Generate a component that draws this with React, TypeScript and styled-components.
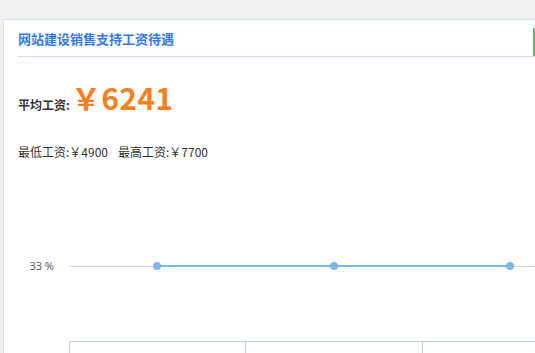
import React from "react";
import styled, { createGlobalStyle } from "styled-components";

const Global = createGlobalStyle`
  html, body { margin: 0; padding: 0; overflow: hidden; }
  body {
    background: #f1f1f1;
    font-family: "Noto Sans CJK SC", "Noto Sans", sans-serif;
    color: #333;
  }
`;

const Page = styled.div`
  padding: 19px 0 0 3px;
  width: 535px;
  height: 353px;
  box-sizing: border-box;
  overflow: hidden;
`;

const Card = styled.div`
  background: #fff;
  border-top: 1px solid #d3e1f5;
  border-left: 1px solid #d3e1f5;
  height: 334px;
  box-sizing: border-box;
  display: flex;
  flex-direction: column;
`;

const Header = styled.div`
  margin-left: 14px;
  height: 36px;
  flex-shrink: 0;
  border-bottom: 1px solid #d3e1f5;
  display: flex;
  align-items: center;
  justify-content: space-between;
`;

const Title = styled.h2`
  margin: 0;
  font-size: 13px;
  font-weight: 700;
  color: #3478ea;
  line-height: 1;
  padding-top: 1px;
`;

const GreenTab = styled.div`
  align-self: flex-end;
  width: 2px;
  height: 28px;
  background: #5cb85c;
`;

const AvgRow = styled.div`
  margin: 25px 0 0 14px;
  display: flex;
  align-items: baseline;
  gap: 1px;
`;

const AvgLabel = styled.span`
  font-size: 12px;
  font-weight: 700;
  color: #333;
`;

const AvgValue = styled.span`
  font-size: 30px;
  font-weight: 700;
  color: #f57f21;
  line-height: 1;
  letter-spacing: 0.3px;
`;

const Range = styled.div`
  margin: 30px 0 0 14px;
  font-size: 12px;
  color: #333;
  display: flex;
  gap: 10px;
`;

const Chart = styled.svg`
  display: block;
  margin-top: auto;
  flex-shrink: 0;
`;

const Y0 = 170;
const W = 531;
const H = 183;
const pts = [157, 334, 510];
const ticks = [69.5, 245.5, 422.5];

export default function App() {
  return (
    <>
      <Global />
      <Page>
        <Card>
          <Header>
            <Title>网站建设销售支持工资待遇</Title>
            <GreenTab />
          </Header>
          <AvgRow>
            <AvgLabel>平均工资:</AvgLabel>
            <AvgValue>￥6241</AvgValue>
          </AvgRow>
          <Range>
            <span>最低工资:￥4900</span>
            <span>最高工资:￥7700</span>
          </Range>
          <Chart width={W} height={H} viewBox={`4 ${Y0} ${W} ${H}`}>
            <line x1={69} y1={266.5} x2={535} y2={266.5} stroke="#d8d8d8" strokeWidth={1} />
            <text
              x={54}
              y={270}
              textAnchor="end"
              fontSize={11}
              fill="#606060"
              fontFamily="'Noto Sans', sans-serif"
            >
              33 %
            </text>
            <polyline
              points={pts.map((x) => `${x},266`).join(" ")}
              fill="none"
              stroke="#7cb5ec"
              strokeWidth={2}
            />
            {pts.map((x) => (
              <circle key={x} cx={x} cy={266} r={4} fill="#7cb5ec" />
            ))}
            <line x1={69} y1={341.5} x2={535} y2={341.5} stroke="#c0d0e0" strokeWidth={1} />
            {ticks.map((x) => (
              <line key={x} x1={x} y1={341} x2={x} y2={353} stroke="#c0d0e0" strokeWidth={1} />
            ))}
          </Chart>
        </Card>
      </Page>
    </>
  );
}
